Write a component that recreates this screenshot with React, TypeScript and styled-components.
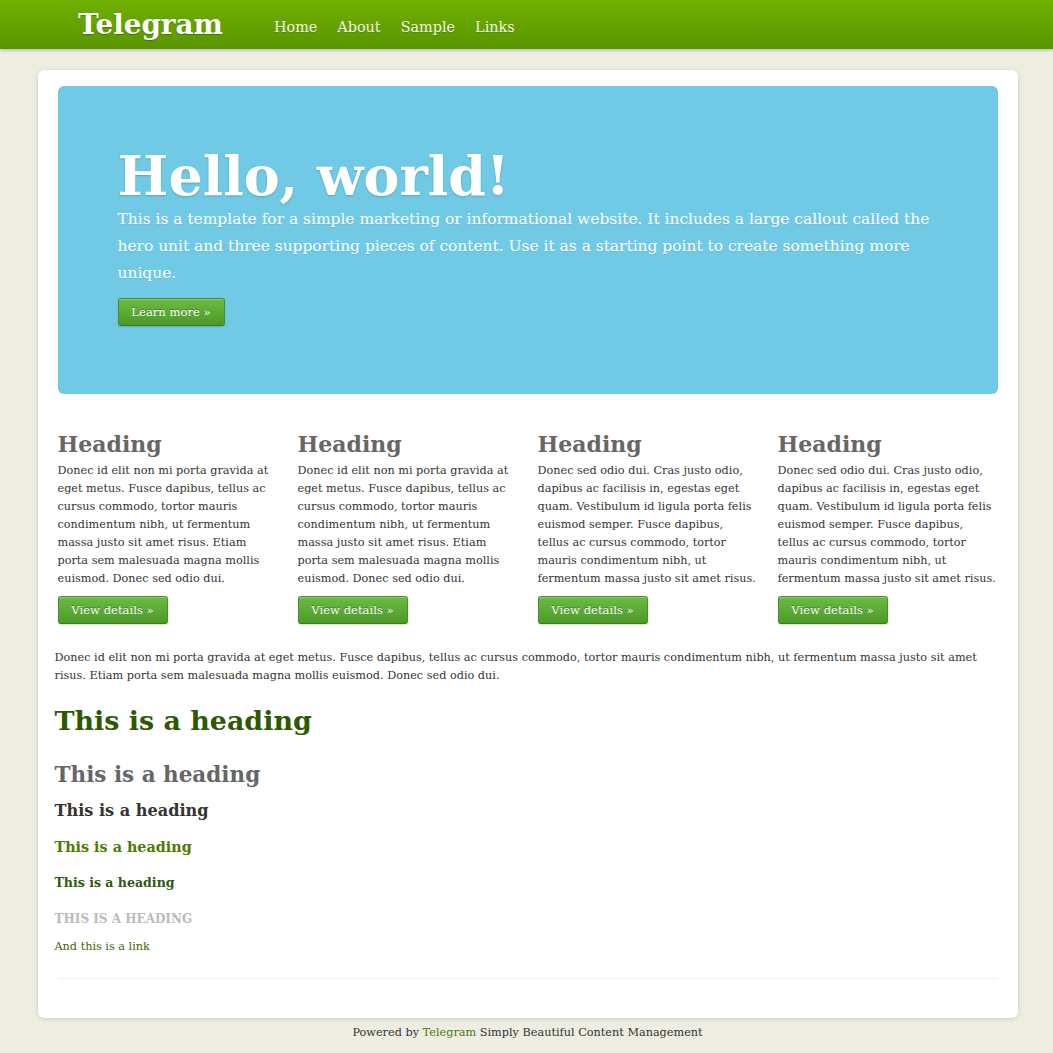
import React from "react";
import styled, { createGlobalStyle } from "styled-components";

const SERIF = `"DejaVu Serif", Georgia, serif`;

const GlobalStyle = createGlobalStyle`
  html, body { margin: 0; padding: 0; }
  body {
    background: #edede2;
    font-family: ${SERIF};
    font-size: 11.25px;
    line-height: 18px;
    color: #333;
  }
  * { box-sizing: border-box; }
`;

const Navbar = styled.header`
  height: 49px;
  background: linear-gradient(#6fb000, #5a9500);
  box-shadow: 0 1px 3px rgba(0, 0, 0, 0.25);
  display: flex;
  align-items: center;
  padding-left: 78px;
`;

const Brand = styled.a`
  font-family: ${SERIF};
  font-weight: 700;
  font-size: 27.8px;
  color: #fff;
  text-decoration: none;
  text-shadow: 0 1px 1px rgba(0, 0, 0, 0.25);
  margin-right: 51px;
  margin-top: 1px;
`;

const NavList = styled.nav`
  display: flex;
  gap: 20px;
  margin-top: 4px;
`;

const NavLink = styled.a`
  font-size: 14.4px;
  color: #f3f7e6;
  text-decoration: none;
  text-shadow: 0 1px 0 rgba(0, 0, 0, 0.15);
`;

const Container = styled.main`
  width: 980px;
  margin: 21px auto 0;
  background: #fff;
  border-radius: 6px;
  box-shadow: 0 1px 4px rgba(0, 0, 0, 0.15);
  padding: 16px 20px 0;
  height: 948px;
  position: relative;
  left: 1px;
`;

const Hero = styled.section`
  background: #70cae5;
  border-radius: 6px;
  padding: 60px 60px 0;
  height: 308px;
  margin-bottom: 30px;
`;

const HeroTitle = styled.h1`
  margin: 0;
  font-size: 53.9px;
  line-height: 60px;
  font-weight: 700;
  color: #fff;
  text-shadow: 0 1px 2px rgba(0, 0, 0, 0.2);
`;

const HeroText = styled.p`
  margin: 0 -6px 11px 0;
  font-size: 15.45px;
  line-height: 27px;
  color: #fff;
  text-shadow: 0 1px 0 rgba(0, 0, 0, 0.08);
`;

const Button = styled.a<{ $w: number }>`
  display: inline-flex;
  align-items: center;
  justify-content: center;
  width: ${(p) => p.$w}px;
  height: 28px;
  border-radius: 3px;
  background: linear-gradient(#6bbb44, #4b9a27);
  border: 1px solid #4a8f2c;
  border-bottom-color: #3b7a1f;
  box-shadow: inset 0 1px 0 rgba(255, 255, 255, 0.25), 0 1px 2px rgba(0, 0, 0, 0.15);
  color: #fff;
  font-size: 11.6px;
  text-decoration: none;
  text-shadow: 0 -1px 0 rgba(0, 0, 0, 0.3);
`;

const Columns = styled.div`
  display: grid;
  grid-template-columns: repeat(4, 219.5px);
  column-gap: 20.5px;
  margin-bottom: 25px;
`;

const Column = styled.div``;

const ColHeading = styled.h2`
  margin: 0;
  padding-top: 2px;
  font-size: 22px;
  line-height: 36px;
  font-weight: 700;
  color: #666;
`;

const ColText = styled.p`
  margin: 0 0 8px;
`;

const Lower = styled.section`
  margin-left: -3px;
`;

const Para = styled.p`
  margin: 0 0 18px;
  width: 940px;
`;

const Heading = styled.div<{ $size: number; $color: string; $mb?: number; $upper?: boolean }>`
  margin: 0 0 ${(p) => p.$mb ?? 0}px;
  font-size: ${(p) => p.$size}px;
  line-height: 36px;
  font-weight: 700;
  color: ${(p) => p.$color};
  text-transform: ${(p) => (p.$upper ? "uppercase" : "none")};
`;

const TextLink = styled.a`
  display: block;
  color: #3b6a00;
  text-decoration: none;
  padding-top: 1px;
`;

const Rule = styled.hr`
  border: 0;
  border-top: 1px solid #eee;
  margin: 22px 0 0;
`;

const Footer = styled.footer`
  text-align: center;
  margin-top: 6px;
  font-size: 11.28px;
  color: #333;
  position: relative;
  left: 1px;
`;

const FooterLink = styled.a`
  color: #4a7a12;
  text-decoration: none;
`;

const colsA =
  "Donec id elit non mi porta gravida at eget metus. Fusce dapibus, tellus ac cursus commodo, tortor mauris condimentum nibh, ut fermentum massa justo sit amet risus. Etiam porta sem malesuada magna mollis euismod. Donec sed odio dui.";
const colsB =
  "Donec sed odio dui. Cras justo odio, dapibus ac facilisis in, egestas eget quam. Vestibulum id ligula porta felis euismod semper. Fusce dapibus, tellus ac cursus commodo, tortor mauris condimentum nibh, ut fermentum massa justo sit amet risus.";

const columns = [colsA, colsA, colsB, colsB];

const headings: { size: number; color: string; mb?: number; upper?: boolean }[] = [
  { size: 26.9, color: "#2d5900", mb: 18 },
  { size: 21.5, color: "#666" },
  { size: 16.1, color: "#333" },
  { size: 14.35, color: "#4d7c00" },
  { size: 12.55, color: "#2e5a0c" },
  { size: 12, color: "#bbb", upper: true },
];

export default function App() {
  return (
    <>
      <GlobalStyle />
      <Navbar>
        <Brand href="#">Telegram</Brand>
        <NavList>
          <NavLink href="#">Home</NavLink>
          <NavLink href="#">About</NavLink>
          <NavLink href="#">Sample</NavLink>
          <NavLink href="#">Links</NavLink>
        </NavList>
      </Navbar>
      <Container>
        <Hero>
          <HeroTitle>Hello, world!</HeroTitle>
          <HeroText>
            This is a template for a simple marketing or informational website. It includes a large callout called the
            hero unit and three supporting pieces of content. Use it as a starting point to create something more
            unique.
          </HeroText>
          <Button href="#" $w={107}>Learn more »</Button>
        </Hero>
        <Columns>
          {columns.map((t, i) => (
            <Column key={i}>
              <ColHeading>Heading</ColHeading>
              <ColText>{t}</ColText>
              <Button href="#" $w={110}>View details »</Button>
            </Column>
          ))}
        </Columns>
        <Lower>
          <Para>
            Donec id elit non mi porta gravida at eget metus. Fusce dapibus, tellus ac cursus commodo, tortor mauris
            condimentum nibh, ut fermentum massa justo sit amet risus. Etiam porta sem malesuada magna mollis euismod.
            Donec sed odio dui.
          </Para>
          {headings.map((h, i) => (
            <Heading key={i} $size={h.size} $color={h.color} $mb={h.mb} $upper={h.upper}>
              This is a heading
            </Heading>
          ))}
          <TextLink href="#">And this is a link</TextLink>
        </Lower>
        <Rule />
      </Container>
      <Footer>
        Powered by <FooterLink href="#">Telegram</FooterLink> Simply Beautiful Content Management
      </Footer>
    </>
  );
}
